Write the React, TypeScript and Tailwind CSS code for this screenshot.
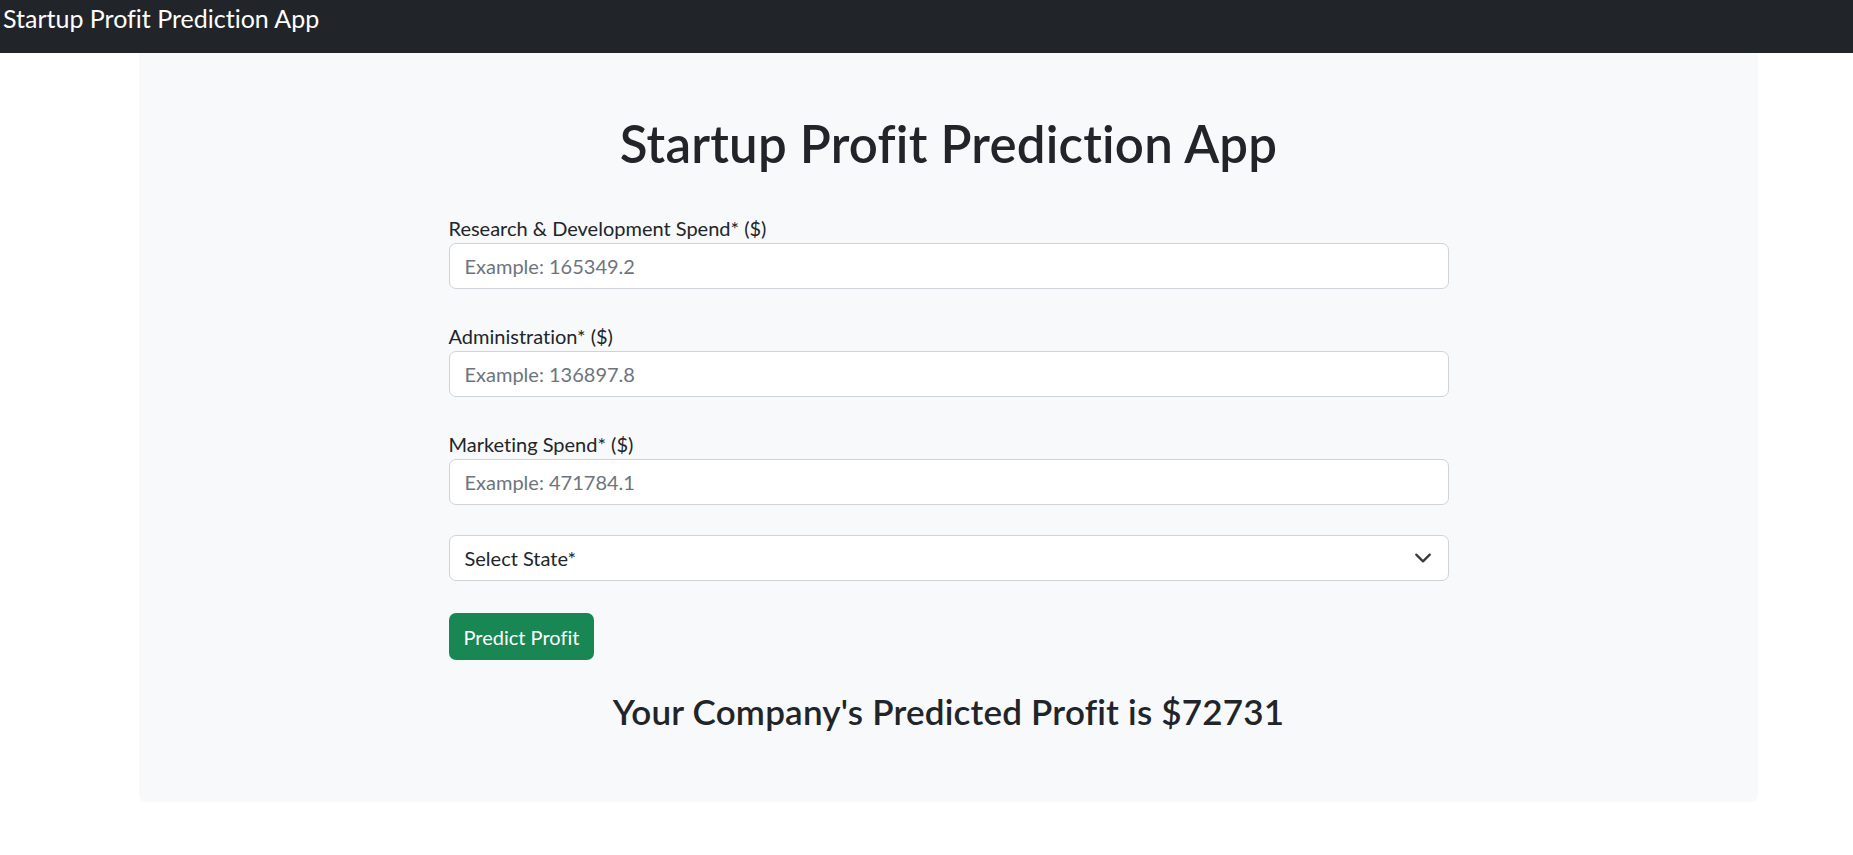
import React from "react";

function Field({ label, placeholder }: { label: string; placeholder: string }) {
  return (
    <div className="mb-[32px]">
      <label className="block text-[20px] leading-[30px] text-[#212529]">{label}</label>
      <input
        type="text"
        placeholder={placeholder}
        className="block w-full h-[46px] rounded-[7px] border border-[#ced4da] bg-white px-[15px] text-[20px] leading-[30px] text-[#212529] placeholder:text-[#6c757d] outline-none"
      />
    </div>
  );
}

export default function App() {
  return (
    <div className="min-h-screen bg-white font-['Lato','Segoe_UI',sans-serif] text-[#212529] [font-variant-ligatures:no-common-ligatures]">
      <nav className="h-[53px] bg-[#212529] pl-[3px] pt-[3px]">
        <span className="text-[25px] leading-[30px] text-white">Startup Profit Prediction App</span>
      </nav>
      <div className="pl-[139px]">
        <div className="w-[1619px] rounded-b-[7px] bg-[#f8f9fa] pt-[61px] pb-[70px]">
          <h1 className="text-center text-[51px] font-semibold leading-[60px] mb-[39px] tracking-[0.2px]">
            Startup Profit Prediction App
          </h1>
          <form className="mx-auto w-[1000px]" onSubmit={(e) => e.preventDefault()}>
            <Field label="Research & Development Spend* ($)" placeholder="Example: 165349.2" />
            <Field label="Administration* ($)" placeholder="Example: 136897.8" />
            <Field label="Marketing Spend* ($)" placeholder="Example: 471784.1" />
            <div className="relative mb-[32px] -mt-[2px]">
              <select
                defaultValue=""
                className="block w-full h-[46px] appearance-none rounded-[7px] border border-[#ced4da] bg-white pl-[15px] pr-[50px] text-[20px] leading-[30px] text-[#212529] outline-none"
              >
                <option value="">Select State*</option>
                <option value="New York">New York</option>
                <option value="California">California</option>
                <option value="Florida">Florida</option>
              </select>
              <svg
                className="pointer-events-none absolute right-[17px] top-1/2 h-[18px] w-[18px] -translate-y-1/2"
                viewBox="0 0 16 16"
                fill="none"
              >
                <path d="m2 5 6 6 6-6" stroke="#343a40" strokeWidth="2" strokeLinecap="round" strokeLinejoin="round" />
              </svg>
            </div>
            <button
              type="submit"
              className="h-[47px] rounded-[7px] bg-[#198754] px-[15px] text-[20px] leading-[30px] text-white"
            >
              Predict Profit
            </button>
          </form>
          <h3 className="mt-[30px] text-center text-[35px] font-semibold leading-[42px] tracking-[0.2px]">
            Your Company's Predicted Profit is $72731
          </h3>
        </div>
      </div>
    </div>
  );
}
